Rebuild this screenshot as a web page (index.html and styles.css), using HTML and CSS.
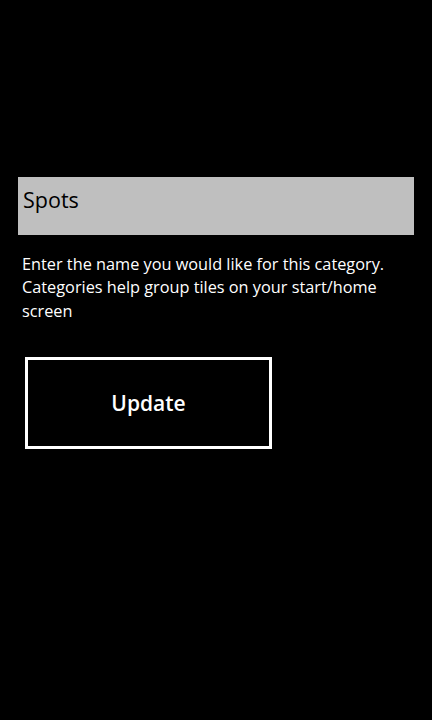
FILE: index.html
```html
<!DOCTYPE html>
<html>
<head>
<meta charset="utf-8">
<link rel="stylesheet" href="styles.css">
</head>
<body>
<main class="page">
  <div class="field"><span class="field-text">Spots</span></div>
  <p class="hint">Enter the name you would like for this category. Categories help group tiles on your start/home screen</p>
  <button class="update">Update</button>
</main>
</body>
</html>
```
FILE: styles.css
```css
html, body {
  margin: 0;
  padding: 0;
  background: #000;
  width: 432px;
  height: 720px;
  overflow: hidden;
}
.page {
  display: flex;
  flex-direction: column;
  align-items: flex-start;
  padding: 177px 18px 0 18px;
  font-family: "Open Sans", "Noto Sans", sans-serif;
  color: #fff;
}
.field {
  box-sizing: border-box;
  width: 396px;
  height: 58px;
  background: #bfbfbf;
  padding: 8px 0 0 5px;
}
.field-text {
  font-size: 21.5px;
  color: #000;
  line-height: 30px;
}
.hint {
  margin: 18px 0 0 4px;
  font-size: 16.3px;
  line-height: 23.3px;
  width: 392px;
}
.update {
  margin: 34px 0 0 7px;
  box-sizing: border-box;
  width: 247px;
  height: 92px;
  background: #000;
  border: 3px solid #fff;
  color: #fff;
  font-family: "Open Sans", "Noto Sans", sans-serif;
  font-weight: 600;
  font-size: 21px;
  padding: 0;
}
```
